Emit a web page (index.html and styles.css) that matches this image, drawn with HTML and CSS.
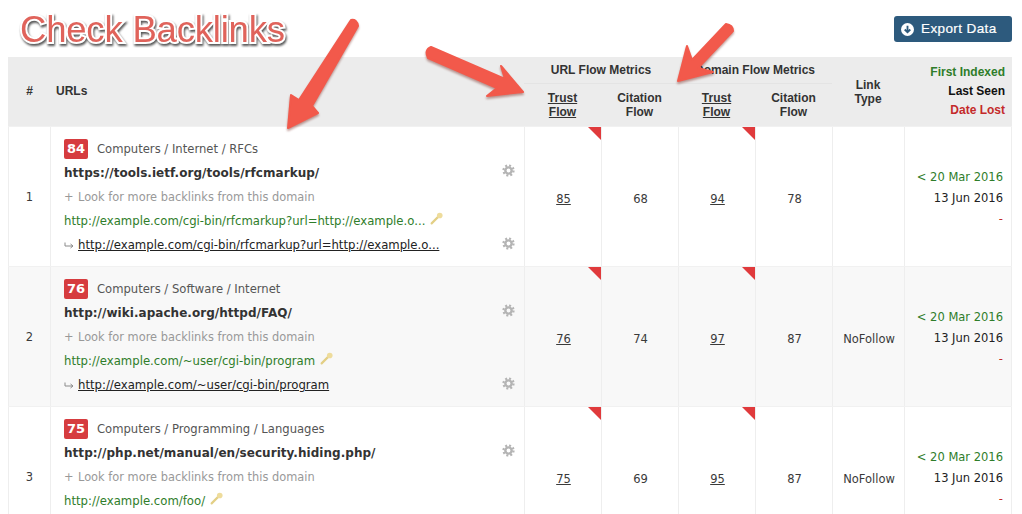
FILE: index.html
```html
<!DOCTYPE html>
<html lang="en">
<head>
<meta charset="utf-8">
<title>Check Backlinks</title>
<link rel="stylesheet" href="styles.css">
</head>
<body>
<svg width="0" height="0" class="defs">
  <defs>
    <g id="gear"><circle cx="7" cy="7" r="3.4" fill="none" stroke="#b4b4b4" stroke-width="2.6"/><circle cx="7" cy="7" r="5.4" fill="none" stroke="#b4b4b4" stroke-width="2.4" stroke-dasharray="2.1 2.14"/></g>
    <g id="key"><path d="M1.5 10.5 L7.5 4.5" stroke="#e3cf85" stroke-width="2" stroke-linecap="round"/><circle cx="9" cy="3.2" r="2.6" fill="#eedc9c"/></g>
    <path id="hook" d="M1 1.5 V5 H8.5 M6.5 3 L9 5 L6.5 7" fill="none" stroke="#8a8a8a" stroke-width="1"/>
  </defs>
</svg>
<main class="page">
  <header class="topbar">
    <h1 class="title">Check Backlinks</h1>
    <a class="export">
      <svg class="export-icon" width="13" height="13" viewBox="0 0 14 14"><circle cx="7" cy="7" r="7" fill="#fff"/><path d="M7 3 V9.5 M4 7 L7 10 L10 7" stroke="#2e5a7c" stroke-width="2" fill="none"/></svg>
      Export Data
    </a>
  </header>
  <section class="table">
    <div class="row head">
      <div class="hc hash">#</div>
      <div class="hc urls">URLs</div>
      <div class="group">
        <div class="group-title">URL Flow Metrics</div>
        <div class="group-sub"><span class="u">Trust<br>Flow</span><span>Citation<br>Flow</span></div>
      </div>
      <div class="group">
        <div class="group-title">Domain Flow Metrics</div>
        <div class="group-sub"><span class="u">Trust<br>Flow</span><span>Citation<br>Flow</span></div>
      </div>
      <div class="hc link-type">Link<br>Type</div>
      <div class="hc dates-head"><span class="green">First Indexed</span><span>Last Seen</span><span class="red">Date Lost</span></div>
    </div>

    <div class="row body">
      <div class="cell num">1</div>
      <div class="cell url-cell">
        <div class="line cat"><span class="badge">84</span>Computers / Internet / RFCs</div>
        <div class="line main-url">https://tools.ietf.org/tools/rfcmarkup/<svg class="gear" viewBox="0 0 14 14"><use href="#gear"/></svg></div>
        <div class="line look"><span class="plus">+</span>Look for more backlinks from this domain</div>
        <div class="line source">http://example.com/cgi-bin/rfcmarkup?url=http://example.o...<svg class="key" viewBox="0 0 12 12"><use href="#key"/></svg></div>
        <div class="line target"><svg class="hook" viewBox="0 0 10 8"><use href="#hook"/></svg><a>http://example.com/cgi-bin/rfcmarkup?url=http://example.o...</a><svg class="gear" viewBox="0 0 14 14"><use href="#gear"/></svg></div>
      </div>
      <div class="cell metric flag"><a>85</a></div>
      <div class="cell metric">68</div>
      <div class="cell metric flag"><a>94</a></div>
      <div class="cell metric">78</div>
      <div class="cell metric"></div>
      <div class="cell dates"><span class="green">&lt; 20 Mar 2016</span><span>13 Jun 2016</span><span class="red">-</span></div>
    </div>

    <div class="row body alt">
      <div class="cell num">2</div>
      <div class="cell url-cell">
        <div class="line cat"><span class="badge">76</span>Computers / Software / Internet</div>
        <div class="line main-url">http://wiki.apache.org/httpd/FAQ/<svg class="gear" viewBox="0 0 14 14"><use href="#gear"/></svg></div>
        <div class="line look"><span class="plus">+</span>Look for more backlinks from this domain</div>
        <div class="line source">http://example.com/~user/cgi-bin/program<svg class="key" viewBox="0 0 12 12"><use href="#key"/></svg></div>
        <div class="line target"><svg class="hook" viewBox="0 0 10 8"><use href="#hook"/></svg><a>http://example.com/~user/cgi-bin/program</a><svg class="gear" viewBox="0 0 14 14"><use href="#gear"/></svg></div>
      </div>
      <div class="cell metric flag"><a>76</a></div>
      <div class="cell metric">74</div>
      <div class="cell metric flag"><a>97</a></div>
      <div class="cell metric">87</div>
      <div class="cell metric">NoFollow</div>
      <div class="cell dates"><span class="green">&lt; 20 Mar 2016</span><span>13 Jun 2016</span><span class="red">-</span></div>
    </div>

    <div class="row body">
      <div class="cell num">3</div>
      <div class="cell url-cell">
        <div class="line cat"><span class="badge">75</span>Computers / Programming / Languages</div>
        <div class="line main-url">http://php.net/manual/en/security.hiding.php/<svg class="gear" viewBox="0 0 14 14"><use href="#gear"/></svg></div>
        <div class="line look"><span class="plus">+</span>Look for more backlinks from this domain</div>
        <div class="line source">http://example.com/foo/<svg class="key" viewBox="0 0 12 12"><use href="#key"/></svg></div>
      </div>
      <div class="cell metric flag"><a>75</a></div>
      <div class="cell metric">69</div>
      <div class="cell metric flag"><a>95</a></div>
      <div class="cell metric">87</div>
      <div class="cell metric">NoFollow</div>
      <div class="cell dates"><span class="green">&lt; 20 Mar 2016</span><span>13 Jun 2016</span><span class="red">-</span></div>
    </div>
  </section>
</main>
<svg class="arrows" width="1022" height="514" viewBox="0 0 1022 514">
  <g fill="#f2594b" stroke="#f2594b" stroke-width="2" stroke-linejoin="round">
    <path d="M351 20 Q357 19 358 26 L312 106 L318 113 L288 128 L291 95 L299 100 Z"/>
    <path d="M431 47 L505 79 L501 66 L523 92 L487 96 L497 88 L428 58 Q424 50 431 47 Z"/>
    <path d="M726 24 Q733 25 733 31 L698 68 L713 72 L678 81 L687 46 L692 60 Z"/>
  </g>
</svg>
</body>
</html>
```
FILE: styles.css
```css
* { box-sizing: border-box; }
html, body { margin: 0; padding: 0; height: 514px; overflow: hidden; background: #fff; }
body { font-family: "DejaVu Sans", Verdana, sans-serif; font-size: 11.5px; color: #3a3a3a; position: relative; }
.defs { position: absolute; }
.page { padding: 0 10px 0 8px; height: 514px; overflow: hidden; }

.topbar { height: 57px; display: flex; justify-content: space-between; align-items: flex-start; padding-left: 12px; }
.title {
  margin: 12px 0 0; font: 400 36.5px/36px "Liberation Sans", Arial, sans-serif; color: #e0635b; letter-spacing: -0.2px;
  -webkit-text-stroke: 4px #fff; paint-order: stroke fill;
  filter: drop-shadow(1px 2px 1px #555);
}
.export {
  margin: 16px 0 0; width: 118px; height: 26px; border-radius: 3px; background: #2d5a7d; color: #fff;
  display: flex; align-items: center; gap: 7px; padding-left: 7px;
  font: 400 13.5px/26px "Liberation Sans", Arial, sans-serif; letter-spacing: 0.4px; -webkit-text-stroke: .2px #fff;
}
.export-icon { flex: none; }

.table { width: 1004px; height: 457px; overflow: hidden; }
.row { display: grid; grid-template-columns: 42px 474px 154px 154px 72px 108px; }
.head { height: 69px; background: #ececec; font: 700 12px/14px "Liberation Sans", Arial, sans-serif; color: #333; }
.hc { display: flex; align-items: center; }
.hash { justify-content: center; padding: 0 0 2px 1px; }
.urls { padding: 0 0 2px 6px; }
.link-type { justify-content: center; text-align: center; padding-top: 1px; }
.dates-head { flex-direction: column; align-items: flex-end; justify-content: center; gap: 5px; padding: 0 7px 1px 0; color: #111; }
.group { display: flex; flex-direction: column; }
.group-title { height: 27px; line-height: 26px; text-align: center; border-bottom: 1px solid #e4e4e4; }
.group-sub { display: grid; grid-template-columns: 77px 77px; text-align: center; padding-top: 7px; }
.u { text-decoration: underline; }
.green { color: #2f7d2a; }
.red { color: #c42a2a; }

.body { height: 140px; border-top: 1px solid #f1f1f1; }
.alt { background: #f8f8f8; }
.row.body { grid-template-columns: 42px 474px 77px 77px 77px 77px 72px 108px; }
.cell { border-left: 1px solid #eee; position: relative; }
.cell:last-child { border-right: 1px solid #eee; }
.num { display: flex; align-items: center; justify-content: center; }
.metric { display: flex; align-items: center; justify-content: center; padding: 5px 0 0 1px; }
.metric a { text-decoration: underline; }
.flag::after {
  content: ""; position: absolute; top: 0; right: 0;
  border-style: solid; border-width: 0 13px 13px 0; border-color: transparent #e03a3c transparent transparent;
}
.dates { display: flex; flex-direction: column; align-items: flex-end; justify-content: center; gap: 6px; padding: 4px 8px 0 0; color: #222; line-height: 15px; }
.url-cell { padding: 10px 9px 0 13px; display: flex; flex-direction: column; }
.line { height: 24px; line-height: 22px; display: flex; align-items: center; white-space: nowrap; position: relative; font-size: 11.7px; }
.cat { color: #555; font-size: 11.6px; }
.badge { width: 24px; height: 20px; border-radius: 2px; background: #d63c3f; color: #fff; font: 700 13px/20px "DejaVu Sans", sans-serif; text-align: center; margin-right: 9px; }
.main-url { font-weight: 700; font-size: 12px; letter-spacing: 0.04px; color: #333; justify-content: space-between; height: 23px; }
.look { color: #999; font-size: 11.4px; height: 25px; }
.plus { width: 14px; flex: none; }
.source { color: #2f7d2a; }
.target { justify-content: flex-start; }
.target a { text-decoration: underline; color: #222; }
.hook { width: 10px; height: 8px; margin-right: 4px; flex: none; }
.gear { width: 13px; height: 13px; flex: none; margin-top: -4px; }
.target .gear { margin-left: auto; }
.key { width: 13px; height: 13px; margin: -6px 0 0 5px; flex: none; }
.arrows { position: absolute; left: 0; top: 0; filter: drop-shadow(0 2px 1px rgba(120,40,30,.45)); pointer-events: none; }
```
